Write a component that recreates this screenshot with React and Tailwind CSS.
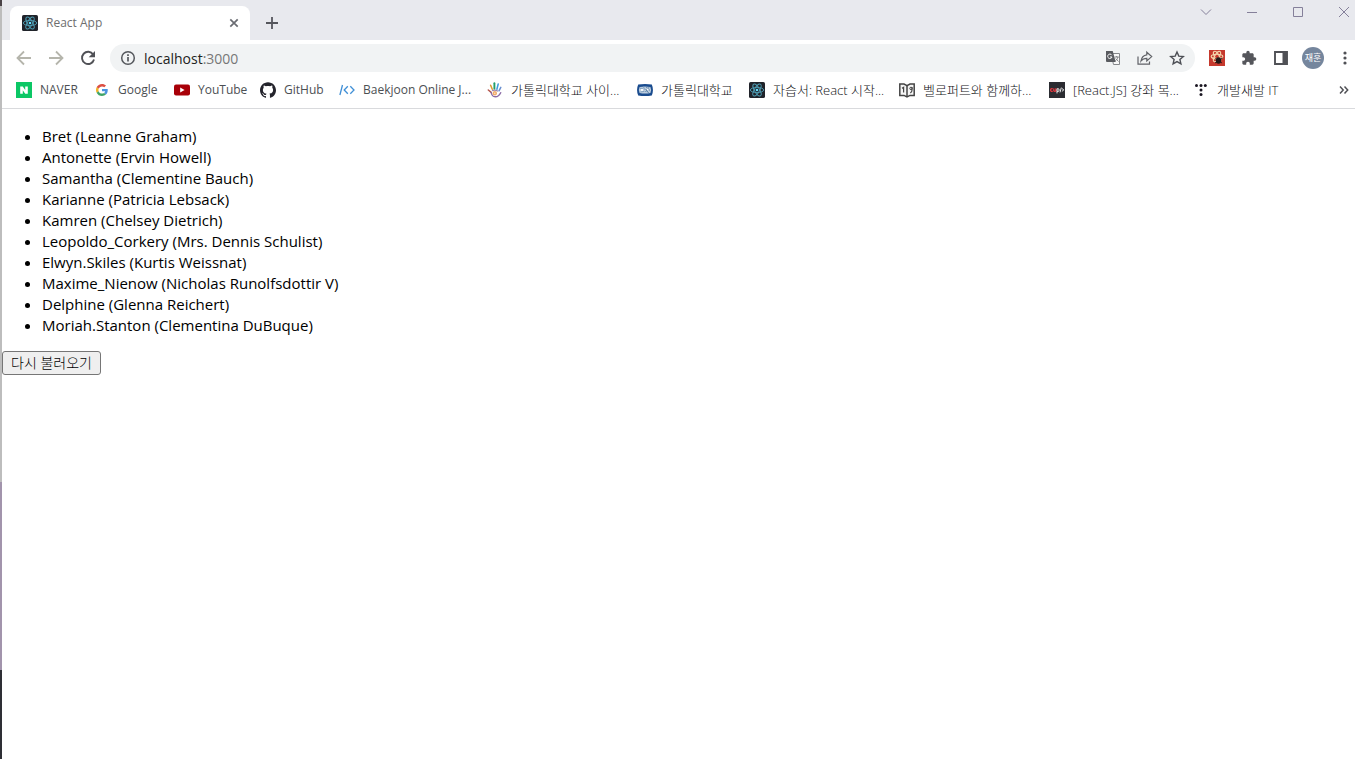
import React from "react";
import { SiGithub } from "react-icons/si";

const users = [
  ["Bret", "Leanne Graham"],
  ["Antonette", "Ervin Howell"],
  ["Samantha", "Clementine Bauch"],
  ["Karianne", "Patricia Lebsack"],
  ["Kamren", "Chelsey Dietrich"],
  ["Leopoldo_Corkery", "Mrs. Dennis Schulist"],
  ["Elwyn.Skiles", "Kurtis Weissnat"],
  ["Maxime_Nienow", "Nicholas Runolfsdottir V"],
  ["Delphine", "Glenna Reichert"],
  ["Moriah.Stanton", "Clementina DuBuque"],
];

function Svg({ children, className = "size-4", box = "0 0 16 16" }) {
  return (
    <svg viewBox={box} className={`shrink-0 ${className}`} fill="none" aria-hidden="true">
      {children}
    </svg>
  );
}

function ReactLogo() {
  return (
    <Svg>
      <rect width="16" height="16" rx="1.6" fill="#20232a" />
      <g stroke="#4f9fb5" strokeWidth="0.9">
        <ellipse cx="8" cy="8" rx="6.7" ry="2.6" />
        <ellipse cx="8" cy="8" rx="6.7" ry="2.6" transform="rotate(60 8 8)" />
        <ellipse cx="8" cy="8" rx="6.7" ry="2.6" transform="rotate(120 8 8)" />
      </g>
      <circle cx="8" cy="8" r="1.3" fill="#61dafb" />
    </Svg>
  );
}

function Naver() {
  return (
    <Svg>
      <rect width="16" height="16" fill="#0bc765" />
      <path d="M4.2 4.4h2.6l2.4 3.5V4.4h2.6v7.4H9.2L6.8 8.3v3.5H4.2z" fill="#fff" />
    </Svg>
  );
}

function Google() {
  return (
    <Svg box="0 0 48 48" className="size-4 p-0.5">
      <path fill="#dd4f43" d="M24 9.5c3.54 0 6.71 1.22 9.21 3.6l6.85-6.85C35.9 2.38 30.47 0 24 0 14.62 0 6.51 5.38 2.56 13.22l7.98 6.19C12.43 13.72 17.74 9.5 24 9.5z" />
      <path fill="#4a93e0" d="M46.98 24.55c0-1.57-.15-3.09-.38-4.55H24v9.02h12.94c-.58 2.96-2.26 5.48-4.78 7.18l7.73 6c4.51-4.18 7.09-10.36 7.09-17.65z" />
      <path fill="#f0b323" d="M10.53 28.59c-.48-1.45-.76-2.99-.76-4.59s.27-3.14.76-4.59l-7.98-6.19C.92 16.46 0 20.12 0 24s.92 7.54 2.56 10.78z" />
      <path fill="#3fa466" d="M24 48c6.48 0 11.93-2.13 15.89-5.81l-7.73-6c-2.15 1.45-4.92 2.3-8.16 2.3-6.26 0-11.57-4.22-13.47-9.91l-7.98 6.19C6.51 42.62 14.62 48 24 48z" />
    </Svg>
  );
}

function YouTube() {
  return (
    <Svg>
      <rect y="2.5" width="16" height="11" rx="2" fill="#a80008" />
      <path d="M6.2 5.5v5L10.6 8z" fill="#fff" />
    </Svg>
  );
}

function Baekjoon() {
  return (
    <Svg>
      <path d="M3.500 3 .900 13M8.800 4.200 5.200 8l3.600 3.800M11.300 4.200 15 8l-3.700 3.800" stroke="#3f8fd6" strokeWidth="1.300" />
    </Svg>
  );
}

function Hand() {
  return (
    <Svg>
      <g strokeLinecap="round" strokeWidth="1.5">
        <path d="M3.600 3.300 5.300 7.200" stroke="#dd9a32" />
        <path d="M7.400 1.300V6.800" stroke="#23a06a" strokeWidth="1.900" />
        <path d="M11.200 2 9.900 7.300" stroke="#3b9de0" />
        <path d="M13.800 5.400 12 8.800" stroke="#6a8fd0" />
        <path d="M1.300 8 4.200 10.300" stroke="#b5574d" />
      </g>
      <path d="M4 10c.5 3 2 4.800 4.300 4.800 2.600 0 4.200-1.600 5.700-4.600" stroke="#8a6aa5" strokeWidth="1.400" />
      <path d="M5 8.800Q8 7.400 11 9.300" stroke="#9a86ae" strokeWidth="1.200" />
      <circle cx="7.800" cy="11.300" r="2.200" fill="#f2ab6c" />
      <circle cx="7.800" cy="11.300" r=".8" fill="#fbe3c8" />
    </Svg>
  );
}

function Catholic() {
  return (
    <Svg>
      <path d="M1.200 2.600Q8 1.300 14.800 2.600q2.300 5.400 0 10.800Q8 14.700 1.200 13.400q-2.300-5.400 0-10.800z" fill="#1a4c8f" />
      <path d="M2.600 4.900Q8 3.900 13.400 4.900q1.600 3.100 0 6.200Q8 12.100 2.600 11.100q-1.600-3.100 0-6.200z" fill="#bccddd" />
      <path d="M9 4.800 13 8.500M8.600 7l3 4M12 5.200 8.500 10" stroke="#5f84ab" strokeWidth="1" />
      <path d="M3 6.300l3 .4M3.400 10l4-.6M6.500 4.600l1 3" stroke="#7f9fc0" />
      <circle cx="5" cy="7.900" r="1.100" fill="#fff" />
      <circle cx="10.700" cy="7.400" r=".8" fill="#fff" />
    </Svg>
  );
}

function Book() {
  return (
    <Svg>
      <path d="M.8 2 5 2l3 1.600L11 2l4.200 0v11.400l-4.200 0L8 15l-3-1.600-4.200 0z" fill="#f6f6f6" stroke="#444" strokeWidth="1.500" />
      <path d="M8 3.400V15" stroke="#444" strokeWidth="1.500" />
      <path d="M3 6.200l1.600-.9v5.200M13 5v3c0 1.500-.6 2.400-1.700 2.900" stroke="#444" strokeWidth="1.200" />
      <circle cx="12" cy="6.400" r="1.200" stroke="#444" strokeWidth="1" />
    </Svg>
  );
}

function Cup() {
  return (
    <Svg>
      <rect width="16" height="16" fill="#2b2c31" />
      <path d="M3.700 6.700Q1.600 6.300 1.600 8t2.100 1.400M4.800 6.500v2.200q1.200 1.200 2.100 0V6.200" stroke="#e8383e" strokeWidth="1.300" />
      <path d="M8 11.400V6.800h1.700q1 1.300 0 2.500H8M12.300 5.600l-1.300 4.800M12.900 6.500l1.900 1.400-1.900 1.500" stroke="#fff" strokeWidth=".9" />
    </Svg>
  );
}

function Dots() {
  return (
    <Svg>
      <g fill="#1b1722">
        <circle cx="3.500" cy="3.500" r="1.500" />
        <circle cx="8" cy="3.500" r="1.500" />
        <circle cx="12.300" cy="3.500" r="1.500" />
        <circle cx="8" cy="8" r="1.500" />
        <circle cx="8" cy="12.500" r="1.500" />
      </g>
    </Svg>
  );
}

const bookmarks = [
  { label: "NAVER", icon: <Naver />, width: "w-[78px]" },
  { label: "Google", icon: <Google />, width: "w-[80px]" },
  { label: "YouTube", icon: <YouTube />, width: "w-[86px]" },
  { label: "GitHub", icon: <SiGithub aria-hidden="true" className="size-4 shrink-0 text-[#24242c]" />, width: "w-[79px]" },
  { label: "Baekjoon Online J...", icon: <Baekjoon />, width: "w-[148px]" },
  { label: "가톨릭대학교 사이...", icon: <Hand />, width: "w-[150px]", korean: true },
  { label: "가톨릭대학교", icon: <Catholic />, width: "w-[112px]", korean: true },
  { label: "자습서: React 시작...", icon: <ReactLogo />, width: "w-[150px]", korean: true },
  { label: "벨로퍼트와 함께하...", icon: <Book />, width: "w-[150px]", korean: true },
  { label: "[React.JS] 강좌 목...", icon: <Cup />, width: "w-[144px]", korean: true },
  { label: "개발새발 IT", icon: <Dots />, width: "w-[100px]", korean: true },
];

function IconButton({ label, children, className = "size-8" }) {
  return (
    <button type="button" aria-label={label} className={`flex shrink-0 items-center justify-center ${className}`}>
      {children}
    </button>
  );
}

function TabStrip() {
  return (
    <div className="flex h-10 items-start bg-[#e8e9ee]">
      <div className="ml-2 flex h-[34px] w-60 items-center self-end rounded-t-lg bg-white pr-2 pl-3">
        <ReactLogo />
        <span className="ml-2 flex-1 text-[12px] text-[#6e6e6e]">React App</span>
        <IconButton label="Close tab" className="size-4">
          <Svg>
            <path d="m4.300 4.300 7.400 7.400M11.700 4.300l-7.400 7.400" stroke="#6a6c72" strokeWidth="1.700" />
          </Svg>
        </IconButton>
      </div>
      <IconButton label="New tab" className="mt-[7px] ml-1.5 size-8">
        <Svg>
          <path d="M8 2v12M2 8h12" stroke="#55565c" strokeWidth="1.800" />
        </Svg>
      </IconButton>
      <div className="ml-auto flex h-6">
        <IconButton label="Search tabs" className="h-6 w-[46px]">
          <Svg><path d="m3 5.500 5 5 5-5" stroke="#85809a" /></Svg>
        </IconButton>
        <IconButton label="Minimize" className="h-6 w-[46px]">
          <Svg><path d="M3 8.500h10" stroke="#85809a" /></Svg>
        </IconButton>
        <IconButton label="Maximize" className="h-6 w-[46px]">
          <Svg><path d="M3.500 3.500h9v9h-9z" stroke="#85809a" /></Svg>
        </IconButton>
        <IconButton label="Close" className="h-6 w-[34px] pl-3">
          <Svg><path d="m3 3 10 10M13 3 3 13" stroke="#85809a" /></Svg>
        </IconButton>
      </div>
    </div>
  );
}

function Toolbar() {
  return (
    <div className="flex h-9 items-center bg-white pl-1.5">
      <IconButton label="Back">
        <Svg><path d="M15 8H2M8 1.500 1.500 8 8 14.500" stroke="#b5b5ac" strokeWidth="1.800" /></Svg>
      </IconButton>
      <IconButton label="Forward">
        <Svg><path d="M1 8h13M8 1.500 14.500 8 8 14.500" stroke="#b5b5ac" strokeWidth="1.800" /></Svg>
      </IconButton>
      <IconButton label="Reload">
        <Svg>
          <path d="M13.200 4.500A6.100 6.100 0 1 0 14 9.500" stroke="#505156" strokeWidth="1.900" />
          <path d="M15 1v6.300H8.700z" fill="#505156" />
        </Svg>
      </IconButton>
      <div className="ml-1.5 flex h-7 min-w-0 flex-1 items-center rounded-full bg-[#f1f3f4] pr-0.5 pl-2.5">
        <Svg>
          <circle cx="8" cy="8" r="6.300" stroke="#55585d" strokeWidth="1.500" />
          <path d="M8 7v4.500M8 4.200v1.700" stroke="#55585d" strokeWidth="1.700" />
        </Svg>
        <label className="relative ml-2 flex flex-1 items-center text-[14px]">
          <span aria-hidden="true" className="text-[#222]">
            localhost<span className="text-[#777]">:3000</span>
          </span>
          <input aria-label="Address" defaultValue="localhost:3000" className="absolute inset-0 w-full bg-transparent text-transparent outline-none" />
        </label>
        <IconButton label="Translate this page">
          <Svg>
            <path d="M6 3.500h8.500v11H8.500z" fill="#f8f8f8" stroke="#85878b" />
            <path d="M1 1h6.700l3 11H2a1 1 0 0 1-1-1z" fill="#595b60" />
            <path d="M6.800 5.200A2.200 2.200 0 1 0 7 7H5" stroke="#fff" />
            <path d="M9.500 7h4.300M11.700 6v1M13 7c-.5 2-1.500 3-2.800 4M10.700 8.500l2.800 3" stroke="#77797d" strokeWidth=".9" />
          </Svg>
        </IconButton>
        <IconButton label="Share">
          <Svg>
            <path d="M1 6.500v7.700h11.500v-2.700" stroke="#606267" strokeWidth="1.200" />
            <path d="M9.800 2.200 14.700 6.600 9.800 11V8.300C7 8.300 5.400 9.200 4 11c.5-3.400 2.500-5.800 5.800-6.200z" stroke="#606267" strokeWidth="1.200" />
          </Svg>
        </IconButton>
        <IconButton label="Bookmark this page">
          <Svg>
            <path d="m8 2 1.800 4.100 4.500.4-3.400 3 1 4.400L8 11.600l-3.900 2.300 1-4.400-3.400-3 4.500-.4z" stroke="#4d4f55" strokeWidth="1.400" />
          </Svg>
        </IconButton>
      </div>
      <div className="flex items-center pl-1.5">
        <IconButton label="Developer tools extension">
          <Svg>
            <rect width="16" height="16" fill="#c6392d" />
            <g stroke="#f5d6ac" strokeWidth="1.100">
              <ellipse cx="8" cy="6.500" rx="5.800" ry="2.300" />
              <ellipse cx="8" cy="6.500" rx="5.800" ry="2.300" transform="rotate(60 8 6.500)" />
              <ellipse cx="8" cy="6.500" rx="5.800" ry="2.300" transform="rotate(120 8 6.500)" />
            </g>
            <ellipse cx="9.500" cy="10.500" rx="2.700" ry="3.200" fill="#211817" />
            <path d="m6 8.500 7 4.500M13.500 8l-7.500 5" stroke="#211817" strokeWidth=".9" />
          </Svg>
        </IconButton>
        <IconButton label="Extensions">
          <Svg box="0 0 24 24">
            <path fill="#55565b" d="M20.500 11H19V7c0-1.100-.9-2-2-2h-4V3.500a2.500 2.500 0 0 0-5 0V5H4c-1.100 0-2 .9-2 2v3.800h1.500c1.500 0 2.700 1.200 2.700 2.700S5 16.200 3.500 16.200H2V20c0 1.100.9 2 2 2h3.800v-1.500c0-1.500 1.200-2.700 2.700-2.700s2.700 1.200 2.700 2.700V22H17c1.100 0 2-.9 2-2v-4h1.500a2.500 2.500 0 0 0 0-5z" />
          </Svg>
        </IconButton>
        <IconButton label="Side panel">
          <Svg>
            <path d="M2 2h12v12H2z" stroke="#505156" strokeWidth="1.900" />
            <path d="M9.500 2H14v12H9.500z" fill="#505156" />
          </Svg>
        </IconButton>
        <IconButton label="Profile">
          <span className="flex size-[22px] items-center justify-center rounded-full bg-[#75869d] text-[9px] text-white">재훈</span>
        </IconButton>
        <IconButton label="Menu" className="h-8 w-[26px] pl-1.5">
          <Svg>
            <g fill="#505156">
              <circle cx="8" cy="3" r="1.600" />
              <circle cx="8" cy="8" r="1.600" />
              <circle cx="8" cy="13" r="1.600" />
            </g>
          </Svg>
        </IconButton>
      </div>
    </div>
  );
}

function BookmarkBar() {
  return (
    <nav aria-label="Bookmarks" className="flex h-[33px] items-center border-b border-[#d9dadd] bg-white pb-1 pl-3.5">
      {bookmarks.map((b) => (
        <a
          key={b.label}
          href="#bookmark"
          className={`flex shrink-0 items-center gap-2 whitespace-nowrap ${b.width} ${b.korean ? "text-[13px] leading-4 font-light text-[#101114]" : "text-[12px] leading-4 text-[#4c4f53]"}`}
        >
          {b.icon}
          <span>{b.label}</span>
        </a>
      ))}
      <IconButton label="More bookmarks" className="ml-auto h-6 w-[22px]">
        <Svg><path d="m4 4.500 3.200 3.500L4 11.500M8.500 4.500l3.200 3.500-3.200 3.500" stroke="#505156" strokeWidth="1.500" /></Svg>
      </IconButton>
    </nav>
  );
}

export default function App() {
  return (
    <div className="flex min-h-screen bg-white font-['Open_Sans','Noto_Sans_CJK_KR',sans-serif]">
      <div className="flex w-0.5 shrink-0 flex-col">
        <div className="h-1.5 bg-[#4a4348]" />
        <div className="flex-[476] bg-[#bdbdbd]" />
        <div className="flex-[188] bg-[#a294ac]" />
        <div className="flex-[89] bg-[#2e2f35]" />
      </div>
      <div className="min-w-0 flex-1">
        <header>
          <TabStrip />
          <Toolbar />
          <BookmarkBar />
        </header>
        <main className="pt-[17px]">
          <ul className="list-disc pl-10 text-[15px] leading-[21px] text-black">
            {users.map(([name, full]) => (
              <li key={name}>{name} ({full})</li>
            ))}
          </ul>
          <button type="button" className="mt-[15px] h-6 rounded-[3px] border border-[#767676] bg-[#efefef] px-2 text-[14px] leading-5 font-light text-black">
            다시 불러오기
          </button>
        </main>
      </div>
    </div>
  );
}
